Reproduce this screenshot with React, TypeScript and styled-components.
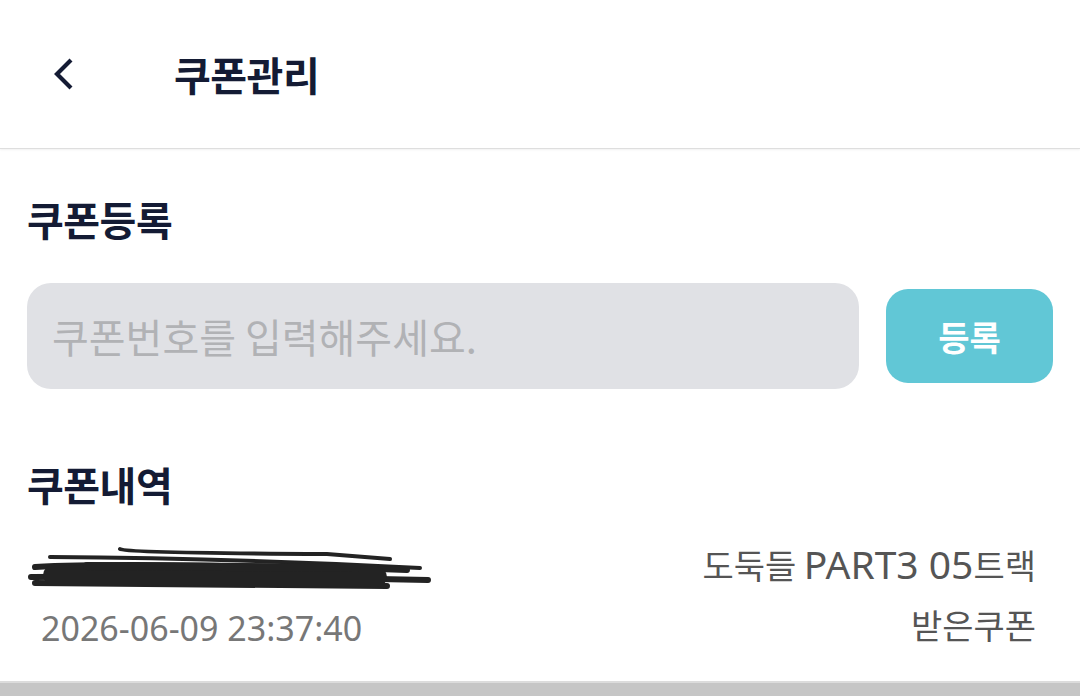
import React from "react";
import styled, { createGlobalStyle } from "styled-components";

const Global = createGlobalStyle`
  html, body { margin: 0; padding: 0; background: #ffffff; }
  body { font-family: "Noto Sans CJK KR", "Noto Sans", sans-serif; overflow: hidden; }
  * { box-sizing: border-box; }
`;

const Page = styled.div`
  width: 1080px;
  height: 696px;
  display: flex;
  flex-direction: column;
  background: #fff;
  overflow: hidden;
`;

const Header = styled.header`
  height: 149px;
  flex: none;
  display: flex;
  align-items: center;
  padding-left: 52px;
  gap: 94px;
  border-bottom: 1px solid #dedede;
  box-shadow: 0 1px 2px rgba(0, 0, 0, 0.06);
`;

const BackButton = styled.button`
  border: none;
  background: none;
  padding: 0;
  width: 28px;
  height: 36px;
  display: flex;
  align-items: center;
  justify-content: flex-start;
  cursor: pointer;
`;

const Title = styled.h1`
  margin: 0;
  font-size: 40px;
  line-height: 48px;
  font-weight: 700;
  color: #141b34;
  letter-spacing: -0.5px;
`;

const Content = styled.main`
  flex: 1;
  display: flex;
  flex-direction: column;
  padding: 0 27px;
`;

const SectionTitle = styled.h2<{ $top: number }>`
  margin: ${(p) => p.$top}px 0 0;
  font-size: 40px;
  line-height: 48px;
  font-weight: 700;
  color: #141b34;
  letter-spacing: -0.5px;
`;

const RegisterRow = styled.div`
  margin-top: 40px;
  display: flex;
  align-items: center;
  gap: 27px;
`;

const CodeInput = styled.input`
  flex: 1;
  min-width: 0;
  height: 106px;
  border: none;
  outline: none;
  border-radius: 24px;
  background: #e0e1e5;
  padding: 0 25px;
  font-family: "Noto Sans CJK KR", "Noto Sans", sans-serif;
  font-size: 40px;
  color: #333;
  &::placeholder {
    color: #b1b2b5;
  }
`;

const RegisterButton = styled.button`
  width: 167px;
  height: 94px;
  flex: none;
  border: none;
  border-radius: 22px;
  background: #61c7d6;
  color: #fff;
  font-family: "Noto Sans CJK KR", "Noto Sans", sans-serif;
  font-size: 34px;
  font-weight: 700;
  cursor: pointer;
`;

const HistoryItem = styled.div`
  margin-top: 30px;
  display: flex;
  justify-content: space-between;
  align-items: flex-start;
  padding-right: 17px;
`;

const LeftCol = styled.div`
  display: flex;
  flex-direction: column;
  padding-top: 8px;
  gap: 18px;
`;

const RightCol = styled.div`
  display: flex;
  flex-direction: column;
  align-items: flex-end;
  gap: 8px;
`;

const Redacted = styled.svg`
  display: block;
  width: 405px;
  height: 44px;
`;

const DateText = styled.span`
  padding-left: 14px;
  font-family: "Noto Sans", sans-serif;
  font-size: 34px;
  line-height: 40px;
  color: #777777;
`;

const InfoText = styled.span`
  font-size: 34px;
  line-height: 52px;
  color: #555555;
  white-space: nowrap;
`;

const Latin = styled.span`
  font-family: "Noto Sans", sans-serif;
  font-size: 39px;
`;

const BottomBar = styled.div`
  height: 15px;
  flex: none;
  background: #c6c6c6;
  border-top: 2px solid #dcdcdc;
`;

export default function App() {
  return (
    <Page>
      <Global />
      <Header>
        <BackButton aria-label="back">
          <svg width="24" height="32" viewBox="0 0 24 32">
            <path d="M19 2 L5 16 L19 30" fill="none" stroke="#141b34" strokeWidth="4.2" />
          </svg>
        </BackButton>
        <Title>쿠폰관리</Title>
      </Header>
      <Content>
        <SectionTitle $top={46}>쿠폰등록</SectionTitle>
        <RegisterRow>
          <CodeInput placeholder="쿠폰번호를 입력해주세요." />
          <RegisterButton>등록</RegisterButton>
        </RegisterRow>
        <SectionTitle $top={71}>쿠폰내역</SectionTitle>
        <HistoryItem>
          <LeftCol>
            <Redacted viewBox="0 0 405 44">
              <g fill="none" stroke="#232323" strokeLinecap="round">
                <path d="M93 3 Q98 7 300 8 L363 13" strokeWidth="4" />
                <path d="M23 11 Q200 12 393 22" strokeWidth="4" />
                <path d="M8 21 Q100 16 380 24" strokeWidth="6" />
                <path d="M4 31 Q200 29 401 34" strokeWidth="6" />
                <path d="M8 37 L360 40" strokeWidth="6" />
                <path d="M26 29 L350 31" strokeWidth="20" />
                <path d="M60 20 L330 22" strokeWidth="8" />
              </g>
            </Redacted>
            <DateText>2026-06-09 23:37:40</DateText>
          </LeftCol>
          <RightCol>
            <InfoText>
              도둑들 <Latin>PART3 05</Latin>트랙
            </InfoText>
            <InfoText>받은쿠폰</InfoText>
          </RightCol>
        </HistoryItem>
      </Content>
      <BottomBar />
    </Page>
  );
}
